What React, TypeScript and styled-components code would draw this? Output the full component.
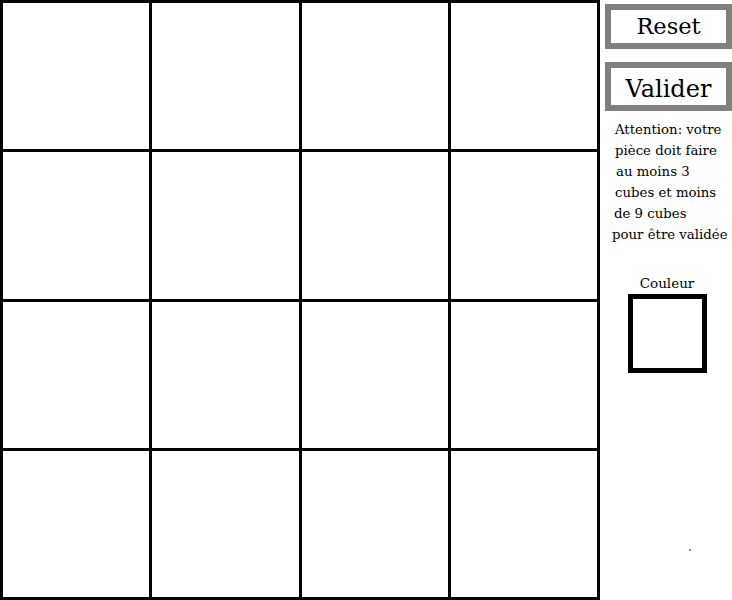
import React from "react";
import styled, { createGlobalStyle } from "styled-components";

const Global = createGlobalStyle`
  html, body { margin: 0; padding: 0; background: #fff; }
  body { font-family: "DejaVu Serif", serif; color: #000; }
`;

const Page = styled.div`
  display: flex;
  width: 732px;
  height: 600px;
  overflow: hidden;
`;

const Board = styled.div`
  box-sizing: border-box;
  width: 600px;
  height: 600px;
  flex: none;
  border: 3px solid #000;
  background: #000;
  display: grid;
  grid-template-columns: repeat(4, 1fr);
  grid-template-rows: repeat(4, 1fr);
  gap: 3px;
`;

const Cell = styled.div`
  background: #fff;
`;

const Panel = styled.div`
  flex: 1;
  display: flex;
  flex-direction: column;
  padding: 4px 0 0 5px;
`;

const Button = styled.button<{ $h: number; $size: number; $pt?: number }>`
  box-sizing: border-box;
  width: 127px;
  height: ${(p) => p.$h}px;
  border: 6px solid #808080;
  background: #fff;
  padding: ${(p) => p.$pt ?? 0}px 0 0;
  font: inherit;
  font-family: "DejaVu Serif", serif;
  font-size: ${(p) => p.$size}px;
  line-height: 1;
  color: #000;
  cursor: pointer;
  & + & {
    margin-top: 13px;
  }
`;

const Notice = styled.p`
  margin: 8px 0 0 10px;
  font-size: 13.3px;
  line-height: 21px;
  white-space: nowrap;
`;

const Line = styled.span<{ $shift?: number }>`
  display: block;
  margin-left: ${(p) => p.$shift ?? 0}px;
`;

const ColorBlock = styled.div`
  display: flex;
  flex-direction: column;
  align-items: center;
  margin-top: 28px;
  width: 124px;
`;

const ColorLabel = styled.span`
  font-size: 13.5px;
  line-height: 20px;
`;

const Swatch = styled.div`
  box-sizing: border-box;
  width: 79px;
  height: 79px;
  border: 5px solid #000;
  background: #fff;
  margin-top: 1px;
`;

const Dot = styled.span`
  width: 2px;
  height: 2px;
  background: #888;
  margin: 176px 0 0 84px;
`;

export default function App() {
  return (
    <>
      <Global />
      <Page>
        <Board>
          {Array.from({ length: 16 }).map((_, i) => (
            <Cell key={i} />
          ))}
        </Board>
        <Panel>
          <Button $h={45} $size={22.5}>Reset</Button>
          <Button $h={49} $size={24} $pt={5}>Valider</Button>
          <Notice>
            <Line>Attention: votre</Line>
            <Line>pièce doit faire</Line>
            <Line $shift={1}>au moins 3</Line>
            <Line>cubes et moins</Line>
            <Line $shift={-1}>de 9 cubes</Line>
            <Line $shift={-3}>pour être validée</Line>
          </Notice>
          <ColorBlock>
            <ColorLabel>Couleur</ColorLabel>
            <Swatch />
          </ColorBlock>
          <Dot />
        </Panel>
      </Page>
    </>
  );
}
